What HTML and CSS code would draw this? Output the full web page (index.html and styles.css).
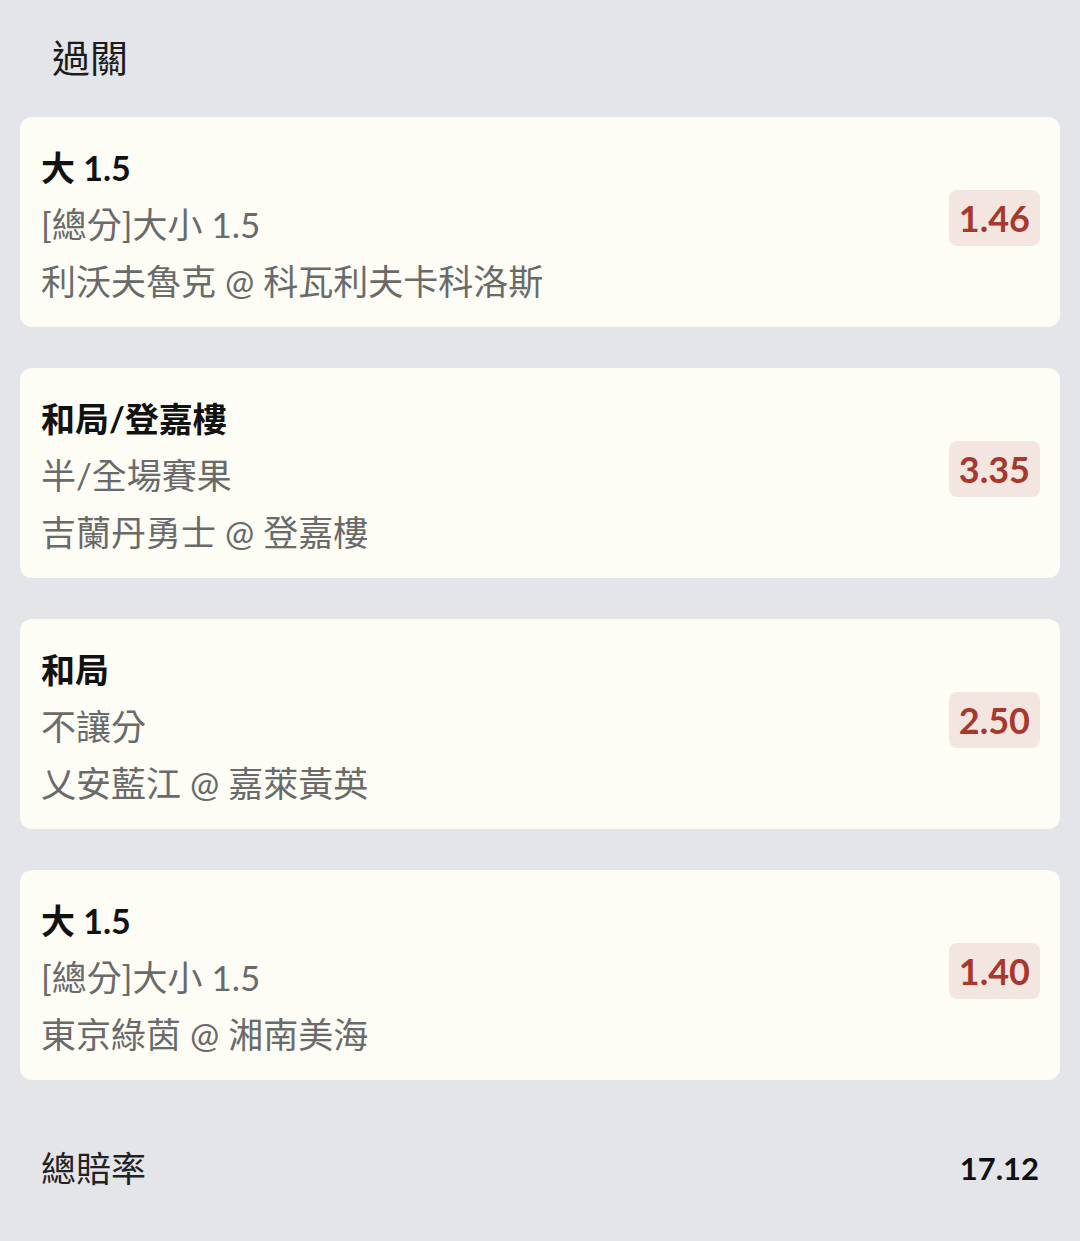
FILE: index.html
```html
<!DOCTYPE html>
<html lang="zh-Hant">
<head>
    <meta charset="UTF-8">
    <meta name="viewport" content="width=device-width, initial-scale=1.0">
    <title>過關</title>
    <link rel="stylesheet" href="styles.css">
</head>
<body>
    <div class="page-title">過關</div>

    <div class="bet-list">
        <div class="bet-card">
            <div class="bet-info">
                <div class="bet-pick">大 1.5</div>
                <div class="bet-line">[總分]大小 1.5</div>
                <div class="bet-line">利沃夫魯克 @ 科瓦利夫卡科洛斯</div>
            </div>
            <div class="odds">1.46</div>
        </div>

        <div class="bet-card">
            <div class="bet-info">
                <div class="bet-pick">和局/登嘉樓</div>
                <div class="bet-line">半/全場賽果</div>
                <div class="bet-line">吉蘭丹勇士 @ 登嘉樓</div>
            </div>
            <div class="odds">3.35</div>
        </div>

        <div class="bet-card">
            <div class="bet-info">
                <div class="bet-pick">和局</div>
                <div class="bet-line">不讓分</div>
                <div class="bet-line">乂安藍江 @ 嘉萊黃英</div>
            </div>
            <div class="odds">2.50</div>
        </div>

        <div class="bet-card">
            <div class="bet-info">
                <div class="bet-pick">大 1.5</div>
                <div class="bet-line">[總分]大小 1.5</div>
                <div class="bet-line">東京綠茵 @ 湘南美海</div>
            </div>
            <div class="odds">1.40</div>
        </div>
    </div>

    <div class="total-row">
        <span class="total-label">總賠率</span>
        <span class="total-value">17.12</span>
    </div>
</body>
</html>
```

FILE: styles.css
```css
* {
    box-sizing: border-box;
    font-family: 'Lato', 'Noto Sans CJK TC', sans-serif;
}

body {
    background-color: #e4e5e9;
    margin: 0;
    padding: 0;
    width: 1080px;
    min-height: 1241px;
}

.page-title {
    padding: 30px 0 0 52px;
    height: 117px;
    line-height: 54px;
    font-size: 38px;
    color: #1c1c1c;
}

.bet-list {
    display: flex;
    flex-direction: column;
    gap: 41px;
    padding: 0 20px;
}

.bet-card {
    background-color: #fdfdf6;
    border-radius: 12px;
    height: 210px;
    padding: 22px 20px 17px 21px;
    display: flex;
    justify-content: space-between;
    align-items: center;
}

.bet-info {
    align-self: flex-start;
}

.bet-pick {
    font-size: 34px;
    line-height: 57px;
    font-weight: bold;
    color: #111;
}

.bet-line {
    font-size: 35px;
    line-height: 57px;
    color: #6a6a6a;
}

.odds {
    background-color: #f3e6e1;
    color: #a7382d;
    border-radius: 8px;
    height: 56px;
    line-height: 56px;
    padding: 0 10px;
    font-size: 36px;
    font-weight: bold;
    margin-bottom: 13px;
}

.total-row {
    display: flex;
    justify-content: space-between;
    align-items: center;
    padding: 68px 41px 0 41px;
    line-height: 40px;
}

.total-label {
    font-size: 35px;
    color: #222;
}

.total-value {
    font-size: 31px;
    font-weight: bold;
    color: #111;
}
```
